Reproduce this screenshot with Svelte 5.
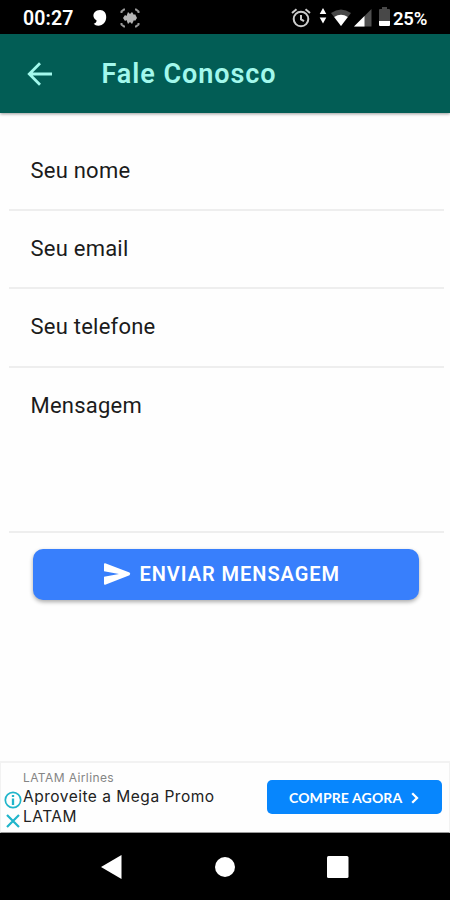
<script>
  const fields = [
    { label: 'Seu nome', size: 'first' },
    { label: 'Seu email', size: 'second' },
    { label: 'Seu telefone', size: 'third' },
    { label: 'Mensagem', size: 'message' }
  ];
</script>

<div class="screen">
  <div class="status">
    <span class="time">00:27</span>
    <svg class="bubble" width="14" height="18" viewBox="0 0 14 18"><path d="M7 1C2.5 1 0 4 .5 7.5C.8 9.5 2.5 10.8 3.5 11.2C3.8 13 2.5 14.2.7 14.8C2.5 17 6 17 8.5 16C12 14.5 13.2 11 13.2 8C13.2 4 11 1 7 1Z" fill="#fff" /></svg>
    <svg class="scan" width="20" height="20" viewBox="0 0 20 20">
      <path d="M1.5 5V3.5L4 1.5H5M15 1.5H16L18.5 3.5V5M18.5 15V16.5L16 18.5H15M5 18.5H4L1.5 16.5V15" fill="none" stroke="#999" stroke-width="2" />
      <path d="M3 10L5 7L6.5 8L8 4L10 6L12 4L14 7L15 6L17 10L15 13L14 12L12 16L10 14L8 16L6.5 12L5 13Z" fill="#b5b5b5" />
    </svg>
    <svg class="alarm" width="20" height="20" viewBox="0 0 20 20" fill="none" stroke="#ccc" stroke-width="2"><circle cx="10" cy="11" r="7.3" /><path d="M1 5L5.5 1.3M14.5 1.3L19 5M10 7V11.4L13 13.2" /></svg>
    <svg class="updown" width="8" height="16" viewBox="0 0 8 16" fill="#fff"><path d="M4 0L7.3 6H.7ZM.7 9.5H7.3L4 15.5Z" /></svg>
    <svg class="wifi" width="20" height="18" viewBox="0 0 20 18"><path d="M0 4Q10-3 20 4L10 17Z" fill="#484848" /><path d="M3.2 8Q10 3.6 16.8 8L10 17Z" fill="#fff" /></svg>
    <svg class="signal" width="18" height="18" viewBox="0 0 18 18"><path d="M0 17.5L17.5 0V17.5Z" fill="#505050" /><path d="M0 17.5L10.5 7V17.5Z" fill="#fff" /></svg>
    <svg class="battery" width="12" height="20" viewBox="0 0 12 20"><path d="M0 3Q0 2 1 2H3V0H8V2H10Q11 2 11 3V14H0Z" fill="#484848" /><path d="M0 14H11V18Q11 19 10 19H1Q0 19 0 18Z" fill="#fff" /></svg>
    <span class="percent">25%</span>
  </div>

  <header>
    <svg width="26" height="24" viewBox="0 0 26 24" fill="none" stroke="#a2f8ec" stroke-width="2.8"><path d="M25 12H2.5M13 1.3L2.3 12L13 22.7" /></svg>
    <h1>Fale Conosco</h1>
  </header>

  <main>
    {#each fields as field}
      <div class="field {field.size}"><span>{field.label}</span></div>
    {/each}
    <button class="send">
      <svg width="27" height="22" viewBox="0 0 27 22" fill="#fff"><path d="M1.2.3L25.5 9.6Q27 11 25.5 12.2L1.2 21.7Q0 22 0 20.8V13.7L15 11L0 8.3V1.2Q0 0 1.2.3Z" /></svg>
      <span>ENVIAR MENSAGEM</span>
    </button>
  </main>

  <aside>
    <div class="choices">
      <svg width="18" height="18" viewBox="0 0 18 18" fill="none" stroke="#20b5cb"><circle cx="9" cy="9" r="7.7" stroke-width="1.7" /><path d="M9 7.5V14M9 4V6" stroke-width="2.3" /></svg>
      <svg width="14" height="14" viewBox="0 0 14 14" stroke="#20b5cb" stroke-width="2.2"><path d="M1 1L13 13M13 1L1 13" /></svg>
    </div>
    <div class="copy">
      <span class="brand">LATAM Airlines</span>
      <span class="line">Aproveite a Mega Promo</span>
      <span class="line latam">LATAM</span>
    </div>
    <button class="buy"><span>COMPRE AGORA</span><svg width="8" height="12" viewBox="0 0 8 12" fill="none" stroke="#fff" stroke-width="2.3"><path d="M1.2 1.2L6 6L1.2 10.8" /></svg></button>
  </aside>

  <nav>
    <svg class="back" width="21" height="24" viewBox="0 0 21 24" fill="#fff"><path d="M20.5 0V24L0 12Z" /></svg>
    <svg class="home" width="20" height="20" viewBox="0 0 20 20" fill="#fff"><circle cx="10" cy="10" r="10" /></svg>
    <svg width="22" height="22" viewBox="0 0 22 22" fill="#fff"><rect width="21.5" height="22" rx="1.5" /></svg>
  </nav>
</div>

<style>
  .screen { width: 450px; height: 900px; display: flex; flex-direction: column; background: #fefefe; font-family: Roboto, "Liberation Sans", sans-serif; overflow: hidden; }
  svg { display: block; flex: none; }
  span { white-space: nowrap; }
  button { border: 0; padding: 0; font: inherit; color: #fff; display: flex; align-items: center; }
  .status { height: 34px; flex: none; box-sizing: border-box; padding: 1px 0 0 23px; background: #000; color: #fff; display: flex; align-items: center; font-size: 19.5px; font-weight: 600; }
  .time { width: 70px; letter-spacing: 0.1px; margin-top: 2px; }
  .scan { margin-left: 13px; }
  .alarm { margin-left: 151px; }
  .updown { margin-left: 8px; margin-top: -4px; }
  .wifi { margin-left: 4px; }
  .signal { margin-left: 3px; }
  .battery { margin-left: 7px; margin-top: -2px; }
  .percent { margin-left: 2px; font-size: 18.5px; letter-spacing: -0.2px; margin-top: 2px; }
  header { height: 79px; flex: none; box-sizing: border-box; padding: 0 0 0 27px; background: #025d55; color: #a2f8ec; display: flex; align-items: center; box-shadow: 0 1px 3px #0006; z-index: 1; }
  h1 { margin: 0 0 0 48.5px; font-size: 27px; line-height: 32px; font-weight: 600; letter-spacing: 0.95px; white-space: nowrap; }
  main { flex: 1; display: flex; flex-direction: column; min-height: 0; }
  .field { margin: 0 6px 0 9px; padding-left: 21.5px; box-sizing: border-box; border-bottom: 2px solid #eee; color: #1b1b1b; font-size: 22px; line-height: 26px; letter-spacing: 0.23px; flex: none; }
  .first { height: 98px; padding-top: 45px; }
  .second { height: 78px; padding-top: 25px; }
  .third { height: 79px; padding-top: 25px; }
  .message { height: 165px; padding-top: 25px; }
  .send { width: 386px; height: 51px; margin: 16px 0 0 33px; border-radius: 10px; background: #387ffc; box-shadow: 0 2px 4px #0005; padding: 0 0 2px 71px; font-size: 20px; font-weight: 600; letter-spacing: 0.96px; }
  .send span { margin-left: 8.5px; }
  aside { height: 72px; flex: none; box-sizing: border-box; border: 1px solid #f2f2f2; border-top-width: 2px; border-bottom: 1px solid #999; background: #fefefe; display: flex; align-items: flex-start; }
  .choices { width: 22px; padding: 28px 0 0 3px; box-sizing: border-box; }
  .choices svg + svg { margin: 5px 0 0 2px; }
  .copy { width: 244px; display: flex; flex-direction: column; padding-top: 7px; }
  .brand { color: #858585; font-family: Inter, sans-serif; font-size: 12px; line-height: 16px; letter-spacing: 0.4px; }
  .line { color: #222; font-family: Inter, sans-serif; font-size: 15.5px; line-height: 20px; letter-spacing: 0.5px; margin-top: 1px; }
  .latam { margin-top: 0; }
  .buy { width: 175px; height: 34px; margin-top: 17px; padding-left: 22px; border-radius: 5px; background: #0786fd; font-family: Lato, sans-serif; font-size: 14px; font-weight: 700; letter-spacing: 0.12px; }
  .buy svg { margin: 1px 0 0 9px; }
  nav { height: 67px; flex: none; box-sizing: border-box; background: #000; display: flex; align-items: center; padding-left: 101px; }
  .home { margin: 0 92px 0 93px; }
</style>
